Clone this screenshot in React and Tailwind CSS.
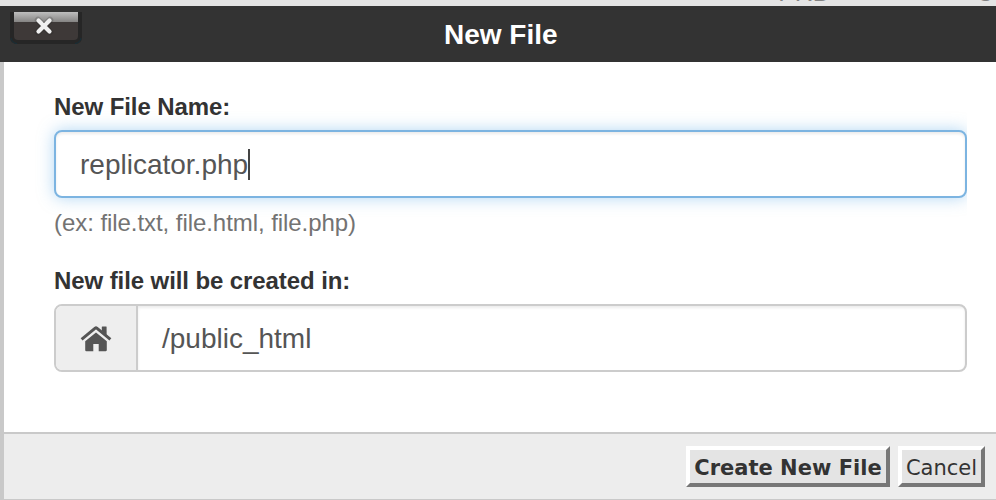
function HomeIcon() {
  return (
    <svg width="32" height="26" viewBox="0 0 32 26" className="mt-[2px]" fill="currentColor">
      <path d="M16 6.400L26.800 15.300V24Q26.800 25.200 25.600 25.200H18.700V18H13.300V25.200H6.400Q5.200 25.200 5.200 24V15.300Z" />
      <path d="M21.800 5V1Q21.800 .5 22.300 .5H26.100Q26.600 .5 26.600 1V9Z" />
      <path d="M1.600 13.300L15.200 2.200Q16 1.600 16.800 2.200L30.400 13.300" fill="none" stroke="currentColor" strokeWidth="3" strokeLinejoin="round" />
    </svg>
  );
}

function CloseButton() {
  return (
    <button aria-label="Close" className="h-[38px] w-[74px] self-start">
      <svg width="74" height="38" viewBox="0 0 74 38">
        <defs>
          <linearGradient id="gloss" x1="0" y1="0" x2="0" y2="1">
            <stop offset="0" stopColor="#bebebe" />
            <stop offset="1" stopColor="#858483" />
          </linearGradient>
        </defs>
        <path d="M0 6H72V31Q72 38 65 38H7Q0 38 0 31Z" fill="#262626" />
        <path d="M1 32Q2 37 7 37.500M71 32Q70 37 65 37.500" fill="none" stroke="#17303a" strokeWidth="1" />
        <path d="M4 6H68V30Q68 34 64 34H8Q4 34 4 30Z" fill="#3e3938" />
        <path d="M4 6H68V16H4Z" fill="url(#gloss)" />
        <path d="M28 14L40 26M40 14L28 26" stroke="#222" strokeWidth="6.500" strokeLinecap="round" opacity=".2" />
        <path d="M28.500 14.500L39.500 25.500M39.500 14.500L28.500 25.500" stroke="#f0f0f0" strokeWidth="4.200" strokeLinecap="round" />
      </svg>
    </button>
  );
}

export default function App() {
  return (
    <div className="flex h-[500px] w-[996px] flex-col overflow-hidden bg-[#c9c9c9] font-['Liberation_Sans',Arial,sans-serif]">
      <div className="flex h-[6px] shrink-0 items-end justify-end overflow-hidden bg-[#e4e4e4] text-[25px] leading-none text-[#828282]">
        <span className="mr-[145px] mb-[1px]">PRD</span>
        <span className="mr-[2px] mb-[1px]">C</span>
      </div>
      <header className="flex h-14 shrink-0 bg-[#333] pl-[10px]">
        <CloseButton />
        <h1 className="ml-[360px] text-[28px] leading-[57px] font-bold text-white">New File</h1>
      </header>
      <main className="ml-1 flex h-[370px] shrink-0 flex-col bg-white pr-[29px] pl-[50px]">
        <label className="mt-[31px] h-[37px] text-[24px] leading-7 font-bold tracking-[-0.09px] text-[#333]">New File Name:</label>
        <div className="h-[68px] shrink-0 [clip-path:inset(-20px_0_-20px_-20px)]">
          <div className="flex h-full items-center rounded-lg border-2 border-[#7cb4e1] bg-white pl-6 text-[28px] text-[#555] shadow-[inset_0_2px_3px_rgba(0,0,0,0.08),0_0_16px_rgba(102,175,233,0.5)]">
            <span className="pt-[2px]">replicator.php</span>
            <span className="h-[31px] w-[2px] bg-[#444]" />
          </div>
        </div>
        <p className="mt-[11px] text-[24px] leading-7 tracking-[-0.06px] text-[#737373]">(ex: file.txt, file.html, file.php)</p>
        <label className="mt-[30px] h-[37px] text-[24px] leading-7 font-bold tracking-[-0.09px] text-[#333]">New file will be created in:</label>
        <div className="flex h-[68px] shrink-0 overflow-hidden rounded-lg border-2 border-[#ccc] text-[28px] text-[#555]">
          <div className="flex w-[82px] items-center justify-center border-r-2 border-[#ccc] bg-[#eee]">
            <HomeIcon />
          </div>
          <div className="flex flex-1 items-center pt-[2px] pl-6 shadow-[inset_0_2px_3px_rgba(0,0,0,0.08)]">/public_html</div>
        </div>
      </main>
      <footer className="mt-[2px] ml-1 flex h-[65px] shrink-0 items-start justify-end gap-2 bg-[#ededed] pt-3 pr-[11px] font-['DejaVu_Sans',Verdana,sans-serif] text-[21px] leading-[33px] text-[#333]">
        <button className="h-[41px] w-[204px] border-4 border-t-white border-r-[#777] border-b-[#777] border-l-white bg-[#e4e4e4] pt-[2px] font-bold whitespace-nowrap">Create New File</button>
        <button className="h-[41px] w-[87px] border-4 border-t-white border-r-[#777] border-b-[#777] border-l-white bg-[#e4e4e4] pt-[2px] whitespace-nowrap">Cancel</button>
      </footer>
    </div>
  );
}
